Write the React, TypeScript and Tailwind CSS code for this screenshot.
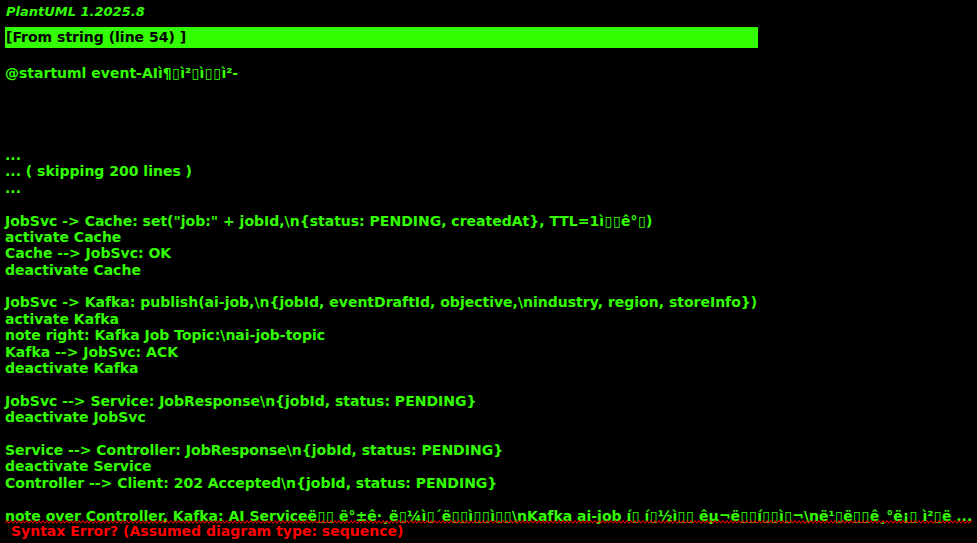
import React from 'react'

const T = '\u25AF'

const lines: string[] = [
  `@startuml event-AIì¶${T}ì²${T}ì${T}${T}ì²-`,
  '',
  '',
  '',
  '',
  '...',
  '... ( skipping 200 lines )',
  '...',
  '',
  `JobSvc -> Cache: set("job:" + jobId,\\n{status: PENDING, createdAt}, TTL=1ì${T}${T}ê°${T})`,
  'activate Cache',
  'Cache --> JobSvc: OK',
  'deactivate Cache',
  '',
  'JobSvc -> Kafka: publish(ai-job,\\n{jobId, eventDraftId, objective,\\nindustry, region, storeInfo})',
  'activate Kafka',
  'note right: Kafka Job Topic:\\nai-job-topic',
  'Kafka --> JobSvc: ACK',
  'deactivate Kafka',
  '',
  'JobSvc --> Service: JobResponse\\n{jobId, status: PENDING}',
  'deactivate JobSvc',
  '',
  'Service --> Controller: JobResponse\\n{jobId, status: PENDING}',
  'deactivate Service',
  'Controller --> Client: 202 Accepted\\n{jobId, status: PENDING}',
  '',
]

const lastLine = `note over Controller, Kafka: AI Serviceë${T}${T} ë°±ê·¸ë${T}¼ì${T}´ë${T}${T}ì${T}${T}ì${T}${T}\\nKafka ai-job í${T} í${T}½ì${T}${T} êµ¬ë${T}${T}í${T}${T}ì${T}¬\\në¹${T}ë${T}${T}ê¸°ë¡${T} ì²${T}ë ...`

// missing-glyph boxes are a bit wider than DejaVu's ▯
const Mojibake = ({ text }: { text: string }) => {
  const parts = text.split(T)
  return (
    <>
      {parts.map((p, i) => (
        <React.Fragment key={i}>
          {p}
          {i < parts.length - 1 && <span className="mx-[0.4px]">{T}</span>}
        </React.Fragment>
      ))}
    </>
  )
}

const App = () => {
  return (
    <div className="min-h-screen w-full bg-black font-['DejaVu_Sans',sans-serif] font-bold">
      {/* Version header */}
      <div className="pl-[6px] pt-[4px] text-[13px] leading-[16px] italic text-[#33ff02]">
        PlantUML 1.2025.8
      </div>

      {/* Error source bar */}
      <div className="ml-[5px] mt-[7px] h-[21px] w-[753px] bg-[#33ff02] pl-[1px] text-[14px] leading-[21px] text-black">
        [From string (line 54) ]
      </div>

      {/* Source listing */}
      <div className="mt-[17px] pl-[5px] text-[14px] leading-[16.4px] text-[#33ff02]">
        {lines.map((line, i) => (
          <div key={i} className="h-[16.4px] whitespace-nowrap">
            <Mojibake text={line} />
          </div>
        ))}
        <div className="relative h-[15px] whitespace-nowrap">
          <span className="relative inline-block">
            <Mojibake text={lastLine} />
            <svg className="absolute left-0 top-[12px] h-[4px] w-full" preserveAspectRatio="none">
              <defs>
                <pattern id="wave" width="4" height="4" patternUnits="userSpaceOnUse">
                  <path d="M0 3.5 L2 0.5 L4 3.5" fill="none" stroke="#ff0000" strokeWidth="1" />
                </pattern>
              </defs>
              <rect x="0" y="0" width="100%" height="4" fill="url(#wave)" />
            </svg>
          </span>
        </div>
        <div className="h-[16.4px] whitespace-nowrap pl-[6px] text-[#ff0000]">
          Syntax Error? (Assumed diagram type: sequence)
        </div>
      </div>
    </div>
  )
}

export default App
